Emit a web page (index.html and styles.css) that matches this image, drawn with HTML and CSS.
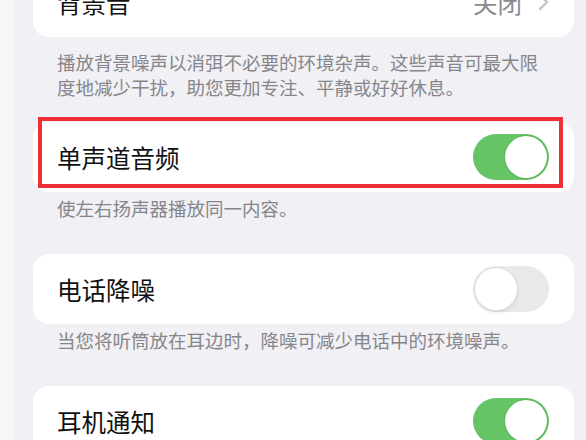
FILE: index.html
```html
<!DOCTYPE html>
<html>
  <head>
    <title>音频设置</title>
    <link rel="stylesheet" href="styles.css">
  </head>
  <body>
    <div class="screen">
      <section class="group group-first">
        <div class="card">
          <span class="label">背景音</span>
          <span class="value">关闭
            <svg class="chevron" width="11" height="18" viewBox="0 0 11 18">
              <polyline points="2,2 9,9 2,16" fill="none" stroke="#c4c4c7" stroke-width="2.4" stroke-linecap="round" stroke-linejoin="round"/>
            </svg>
          </span>
        </div>
        <p class="note">播放背景噪声以消弭不必要的环境杂声。这些声音可最大限度地减少干扰，助您更加专注、平静或好好休息。</p>
      </section>

      <section class="group">
        <div class="card">
          <div class="highlight"></div>
          <span class="label">单声道音频</span>
          <span class="switch on"><span class="knob"></span></span>
        </div>
        <p class="note">使左右扬声器播放同一内容。</p>
      </section>

      <section class="group">
        <div class="card">
          <span class="label">电话降噪</span>
          <span class="switch"><span class="knob"></span></span>
        </div>
        <p class="note">当您将听筒放在耳边时，降噪可减少电话中的环境噪声。</p>
      </section>

      <section class="group">
        <div class="card">
          <span class="label">耳机通知</span>
          <span class="switch on"><span class="knob"></span></span>
        </div>
      </section>
    </div>
  </body>
</html>
```

FILE: styles.css
```css
html, body {
  margin: 0;
  height: 100%;
  overflow: hidden;
}

body {
  font-family: "Noto Sans CJK SC", "Noto Sans", sans-serif;
  background: linear-gradient(to right, #f6f6f8 14px, #f0f0f5 14px);
}

.screen {
  padding: 0 12px 0 33px;
}

.group {
  margin-bottom: 33px;
}

.group-first {
  margin-top: -33px;
  margin-bottom: 22px;
}

.card {
  position: relative;
  display: flex;
  align-items: center;
  justify-content: space-between;
  height: 70px;
  padding: 0 25px 0 24px;
  background-color: #ffffff;
  border-radius: 16px;
}

.label {
  font-size: 24.5px;
  color: #111111;
}

.value {
  display: flex;
  align-items: center;
  gap: 16px;
  font-size: 24.5px;
  color: #8a8a8e;
}

.note {
  margin: 0;
  padding: 4px 30px 0 24px;
  font-size: 18.5px;
  line-height: 25px;
  color: #86868a;
}

.group-first .note {
  padding-top: 13px;
}

.switch {
  position: relative;
  width: 76px;
  height: 46px;
  border-radius: 23px;
  background-color: #e9e9eb;
}

.switch.on {
  background-color: #64c466;
}

.knob {
  position: absolute;
  top: 2px;
  left: 2px;
  width: 42px;
  height: 42px;
  border-radius: 50%;
  background-color: #ffffff;
  box-shadow: 0 0 0 1px #dcdcdc, 0 2px 4px rgba(0, 0, 0, 0.12);
}

.switch.on .knob {
  left: 32px;
  box-shadow: 0 0 0 1px #58b25a;
}

.highlight {
  position: absolute;
  left: 5px;
  right: 11px;
  top: -5px;
  bottom: 4px;
  border: 4px solid #ec3035;
}
```
